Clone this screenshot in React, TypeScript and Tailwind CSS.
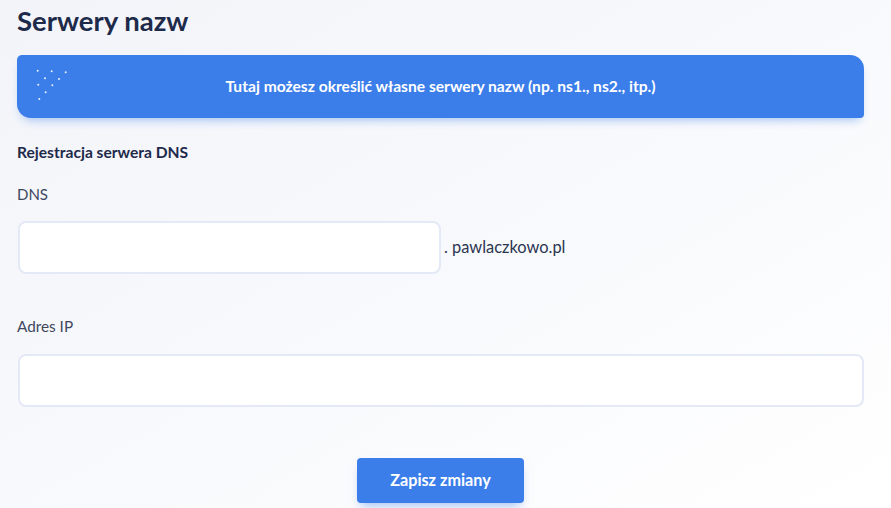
const Dots = () => {
    const pts = [
        [37.7, 70.7], [51.7, 71.3], [65.7, 72.3],
        [45, 78.3], [59, 79],
        [38.3, 84.7], [52.3, 85.3],
        [45.7, 92.3],
        [39.3, 99],
    ]
    return (
        <svg width="40" height="40" viewBox="34 67 40 40" className="absolute left-[17px] top-[12px]">
            {pts.map(([x, y], i) => (
                <circle key={i} cx={x} cy={y} r="1" fill="white" opacity="0.9"/>
            ))}
        </svg>
    )
}

const App = () => {
    return (
        <div className="w-[891px] h-[508px] overflow-hidden bg-gradient-to-br from-[#f2f4f9] via-[#f8f9fc] to-white"
             style={{fontFamily: "Lato, 'Noto Sans', sans-serif"}}>
            <div className="pl-[17px] pr-[27px] pt-[3px]">
                <h1 className="text-[27.5px] font-bold text-[#1e2a4a] leading-[36px]">Serwery nazw</h1>

                <div className="relative mt-[16px] h-[63px] flex items-center justify-center bg-[#3b7eea] rounded-tl-[5px] rounded-br-[4px] rounded-tr-[14px] rounded-bl-[14px] shadow-[0_6px_10px_-4px_rgba(59,126,234,0.45)]">
                    <Dots/>
                    <p className="text-white font-bold text-[15.6px]">Tutaj możesz określić własne serwery nazw (np. ns1., ns2., itp.)</p>
                </div>

                <h2 className="mt-[24px] text-[15.6px] font-bold text-[#1e2a4a] leading-[20px]">Rejestracja serwera DNS</h2>

                <label className="block mt-[22px] text-[15px] text-[#3e4860] leading-[20px]">DNS</label>
                <div className="mt-[17px] flex items-center">
                    <input className="w-[423px] h-[53px] ml-[1px] bg-white border-2 border-[#e3e9f6] rounded-[8px] outline-none px-3"/>
                    <span className="ml-[3px] text-[16.4px] text-[#2b3550]">. pawlaczkowo.pl</span>
                </div>

                <label className="block mt-[42px] text-[15.3px] text-[#3e4860] leading-[20px]">Adres IP</label>
                <input className="block mt-[18px] ml-[1px] w-[846px] h-[53px] bg-white border-2 border-[#e3e9f6] rounded-[8px] outline-none px-3"/>

                <div className="mt-[51px] flex justify-center">
                    <button className="w-[167px] h-[45px] bg-[#3b7eea] text-white font-bold text-[16.2px] rounded-[4px] shadow-[0_6px_10px_-4px_rgba(59,126,234,0.5)]">
                        Zapisz zmiany
                    </button>
                </div>
            </div>
        </div>
    )
}

export default App
